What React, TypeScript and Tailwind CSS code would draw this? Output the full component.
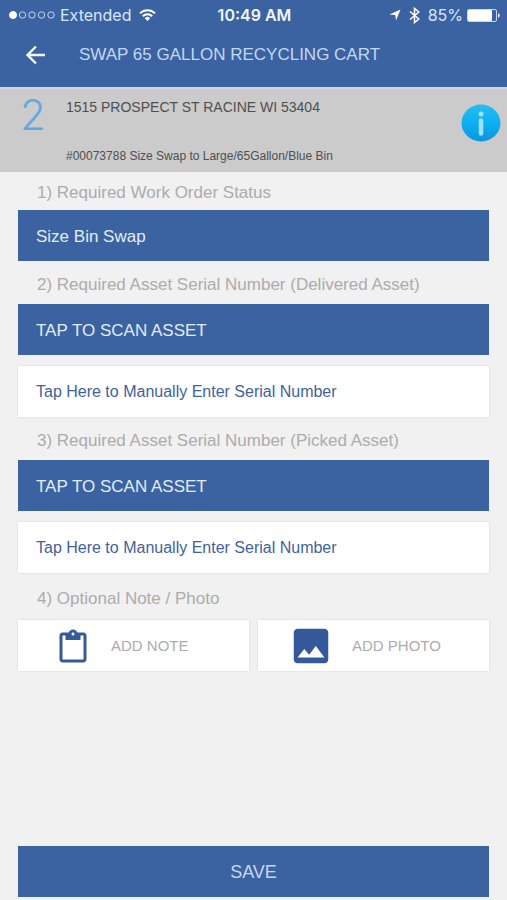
import { useState } from "react";

interface AssetSectionProps {
  title: string;
}

const labelClass = "block px-[19px] text-[17px] leading-6 text-[#acacac]";
const blueButton =
  "h-[51px] w-full bg-[#3b62a1] px-[18px] pt-0.5 text-left text-[17px] leading-6 text-[#e2edfc]";
const whiteButton =
  "h-[51px] w-full bg-white px-[18px] text-left text-base leading-6 text-[#3f62a0] shadow-[0_0_2px_rgba(0,0,0,0.12)]";

function StatusBar() {
  return (
    <div className="grid h-[30px] grid-cols-3 items-center pl-[9px] pr-[7px] font-['Inter',sans-serif] text-base leading-6">
      <div className="flex items-center">
        <svg className="h-2.5 w-[46px] shrink-0" viewBox="0 0 46 10" fill="none" stroke="#c3d8f5">
          <circle cx="4" cy="5" r="3.5" fill="#fff" stroke="#fff" />
          <circle cx="13.5" cy="5" r="3.2" />
          <circle cx="23" cy="5" r="3.2" />
          <circle cx="32.5" cy="5" r="3.2" />
          <circle cx="42" cy="5" r="3.2" />
        </svg>
        <span className="ml-[5px] text-[#d8e8ff]">Extended</span>
        <svg className="ml-2 h-3 w-[17px] shrink-0" viewBox="0 0 17 12" fill="none" stroke="#fff" strokeWidth="2">
          <path d="M1 4.4a10.6 10.6 0 0 1 15 0" />
          <path d="M3.8 7.2a6.6 6.6 0 0 1 9.4 0" />
          <path d="M8.5 12 5.8 9.2a3.8 3.8 0 0 1 5.4 0z" fill="#fff" stroke="none" />
        </svg>
      </div>
      <span className="text-center font-semibold text-[#f1f7ff]">10:49 AM</span>
      <div className="flex items-center justify-end">
        <svg className="h-3 w-3 shrink-0" viewBox="0 0 12 12" fill="#fff">
          <path d="M11.5.5 7 11.5 6.3 6 .5 5.4z" />
        </svg>
        <svg className="ml-2 h-[17px] w-[11px] shrink-0" viewBox="0 0 11 17" fill="none" stroke="#fff" strokeWidth="1.5">
          <path d="M1 4.5 9.8 12 5.500 15.600V1.400L9.800 5 1 12.500" />
        </svg>
        <span className="ml-2 text-[#d8e8ff]">85%</span>
        <svg className="ml-1 h-[13px] w-[33px] shrink-0" viewBox="0 0 33 13">
          <rect x=".5" y=".5" width="29" height="12" rx="1.5" fill="none" stroke="#c3d8f5" />
          <rect x="1" y="1" width="24" height="11" rx="1" fill="#fff" />
          <path d="M31 4.300c2.400.800 2.400 3.600 0 4.400z" fill="#e2edfc" />
        </svg>
      </div>
    </div>
  );
}

function AssetSection({ title }: AssetSectionProps) {
  return (
    <section className="pt-3">
      <h2 className={labelClass}>{title}</h2>
      <button type="button" className={`mt-[7px] ${blueButton}`}>
        TAP TO SCAN ASSET
      </button>
      <button type="button" className={`mt-[11px] ${whiteButton}`}>
        Tap Here to Manually Enter Serial Number
      </button>
    </section>
  );
}

export default function App() {
  const [status, setStatus] = useState("size-bin-swap");

  return (
    <div className="flex min-h-screen flex-col bg-[#f1f1f1] font-['Liberation_Sans',Arial,sans-serif]">
      {/* Header */}
      <header className="bg-[#3b62a1]">
        <StatusBar />
        <div className="flex h-[57px] items-center pb-[7px] pl-6">
          <button type="button" aria-label="Back" className="shrink-0">
            <svg className="h-6 w-6" viewBox="0 0 24 24" fill="none" stroke="#f1f7ff" strokeWidth="2.4">
              <path d="M21 12H4M12 3.5 3.5 12l8.5 8.5" />
            </svg>
          </button>
          <h1 className="ml-[31px] text-[17px] leading-6 text-[#c3d8f5]">SWAP 65 GALLON RECYCLING CART</h1>
        </div>
      </header>

      {/* Work order */}
      <div className="flex h-[85px] border-t-2 border-[#d6d6d8] bg-[#cbcbcb] pr-1.5">
        <span className="w-[66px] shrink-0 pl-5 pt-1.5 font-['Inter',sans-serif] text-[42px] font-light leading-10 text-[#62a9e3]">
          2
        </span>
        <div className="flex flex-1 flex-col justify-between pb-1.5 pt-2 text-[#4f4f4f]">
          <p className="text-sm leading-5">1515 PROSPECT ST RACINE WI 53404</p>
          <p className="text-xs leading-5">#00073788 Size Swap to Large/65Gallon/Blue Bin</p>
        </div>
        <button type="button" aria-label="Information" className="mt-[14px] h-10 shrink-0">
          <svg className="h-10 w-10" viewBox="0 0 40 40">
            <defs>
              <linearGradient id="info" x1="0" y1="0" x2="0" y2="1">
                <stop offset="0" stopColor="#25bdf0" />
                <stop offset=".5" stopColor="#0eb0f3" />
                <stop offset="1" stopColor="#0b95dc" />
              </linearGradient>
            </defs>
            <ellipse cx="20" cy="20" rx="19.5" ry="18.5" fill="url(#info)" />
            <circle cx="20" cy="11" r="2.5" fill="#9fe0fa" />
            <path d="M20 17.5v13" stroke="#9fe0fa" strokeWidth="4.5" strokeLinecap="round" />
          </svg>
        </button>
      </div>

      {/* Form */}
      <main className="flex-1 px-[18px] pt-[9px]">
        <section>
          <label htmlFor="status" className={labelClass}>
            1) Required Work Order Status
          </label>
          <select
            id="status"
            value={status}
            onChange={(e) => setStatus(e.target.value)}
            className={`mt-[5px] block appearance-none ${blueButton}`}
          >
            <option value="size-bin-swap">Size Bin Swap</option>
          </select>
        </section>
        <AssetSection title="2) Required Asset Serial Number (Delivered Asset)" />
        <AssetSection title="3) Required Asset Serial Number (Picked Asset)" />
        <section className="pt-[14px]">
          <h2 className={labelClass}>4) Optional Note / Photo</h2>
          <div className="mt-[9px] grid grid-cols-2 gap-[9px]">
            <button
              type="button"
              className="flex h-[51px] items-center bg-white pl-[37px] text-[15px] leading-6 text-[#acacac] shadow-[0_0_2px_rgba(0,0,0,0.12)]"
            >
              <svg className="h-9 w-9" viewBox="0 -1 24 24" fill="#36599b">
                <path d="M19 2h-4.180C14.400.840 13.300 0 12 0c-1.300 0-2.400.840-2.820 2H5c-1.100 0-2 .9-2 2v16c0 1.100.9 2 2 2h14c1.100 0 2-.9 2-2V4c0-1.100-.9-2-2-2zm-7 0c.550 0 1 .450 1 1s-.450 1-1 1-1-.450-1-1 .450-1 1-1zm7 18H5V4h2v3h10V4h2v16z" />
              </svg>
              <span className="ml-5">ADD NOTE</span>
            </button>
            <button
              type="button"
              className="flex h-[51px] items-center bg-white pl-[30px] text-[15px] leading-6 text-[#acacac] shadow-[0_0_2px_rgba(0,0,0,0.12)]"
            >
              <svg className="h-[46px] w-[46px]" viewBox="0 0 24 24" fill="#36599b">
                <path d="M21 19V5c0-1.100-.9-2-2-2H5c-1.100 0-2 .9-2 2v14c0 1.100.9 2 2 2h14c1.100 0 2-.9 2-2zM8.500 13.500l2.500 3.010L14.500 12l4.500 6H5l3.500-4.500z" />
              </svg>
              <span className="ml-[18px]">ADD PHOTO</span>
            </button>
          </div>
        </section>
      </main>

      {/* Footer */}
      <footer className="px-[18px] pb-[3px] pt-4">
        <button type="button" className="h-[51px] w-full bg-[#3b62a1] text-lg leading-6 text-[#c3d8f5]">
          SAVE
        </button>
      </footer>
    </div>
  );
}
